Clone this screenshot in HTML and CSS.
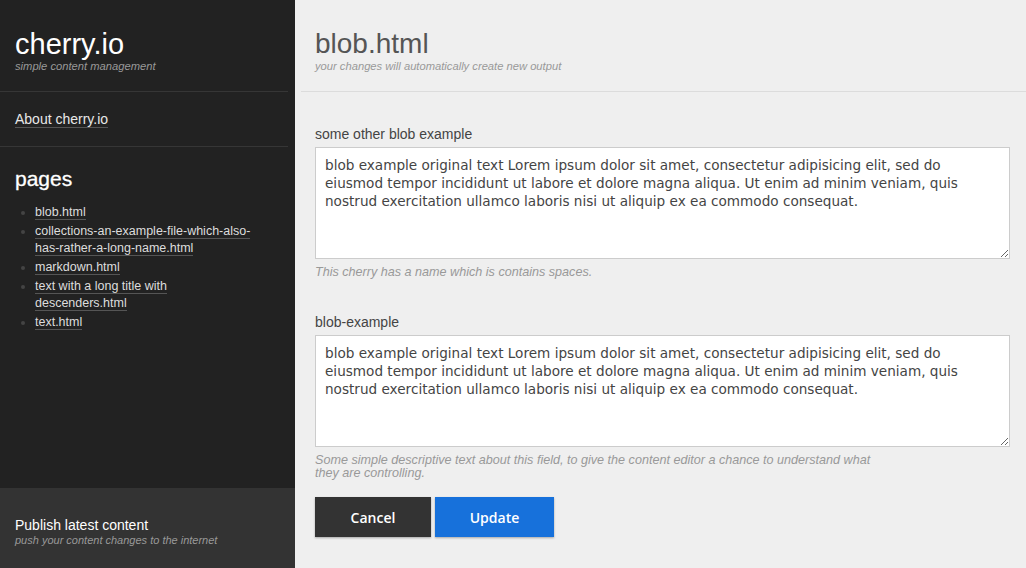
FILE: index.html
```html
<!DOCTYPE html>
<html>
<head>
<meta charset="utf-8">
<link rel="stylesheet" href="styles.css">
</head>
<body>
<div class="app">
  <aside class="sidebar">
    <div class="brand">
      <h1 class="brand-title">cherry.io</h1>
      <p class="brand-sub">simple content management</p>
    </div>
    <div class="about">
      <a class="link about-link" href="#">About cherry.io</a>
    </div>
    <div class="pages">
      <h2 class="pages-title">pages</h2>
      <ul class="page-list">
        <li><a class="link" href="#">blob.html</a></li>
        <li><a class="link" href="#">collections-an-example-file-which-also-has-rather-a-long-name.html</a></li>
        <li><a class="link" href="#">markdown.html</a></li>
        <li><a class="link" href="#">text with a long title with descenders.html</a></li>
        <li><a class="link" href="#">text.html</a></li>
      </ul>
    </div>
    <div class="publish">
      <div class="publish-title">Publish latest content</div>
      <div class="publish-sub">push your content changes to the internet</div>
    </div>
  </aside>
  <main class="main">
    <header class="main-header">
      <h1 class="main-title">blob.html</h1>
      <p class="main-sub">your changes will automatically create new output</p>
    </header>
    <form class="form">
      <div class="field">
        <label class="field-label">some other blob example</label>
        <textarea class="field-input">blob example original text Lorem ipsum dolor sit amet, consectetur adipisicing elit, sed do eiusmod tempor incididunt ut labore et dolore magna aliqua. Ut enim ad minim veniam, quis nostrud exercitation ullamco laboris nisi ut aliquip ex ea commodo consequat.</textarea>
        <p class="field-help">This cherry has a name which is contains spaces.</p>
      </div>
      <div class="field field-last">
        <label class="field-label">blob-example</label>
        <textarea class="field-input">blob example original text Lorem ipsum dolor sit amet, consectetur adipisicing elit, sed do eiusmod tempor incididunt ut labore et dolore magna aliqua. Ut enim ad minim veniam, quis nostrud exercitation ullamco laboris nisi ut aliquip ex ea commodo consequat.</textarea>
        <p class="field-help">Some simple descriptive text about this field, to give the content editor a chance to understand what they are controlling.</p>
      </div>
      <div class="actions">
        <button type="button" class="btn btn-cancel">Cancel</button>
        <button type="button" class="btn btn-update">Update</button>
      </div>
    </form>
  </main>
</div>
</body>
</html>
```
FILE: styles.css
```css
* { box-sizing: border-box; }
html, body { margin: 0; padding: 0; height: 100%; }
body {
  font-family: "Liberation Sans", Arial, sans-serif;
  background: #efefef;
  overflow: hidden;
}
.app {
  display: flex;
  height: 568px;
}
.sidebar {
  width: 295px;
  flex: none;
  background: #222;
  color: #fff;
  display: flex;
  flex-direction: column;
}
.brand {
  padding: 29px 15px 18px;
  border-bottom: 1px solid #363636;
  margin-right: 7px;
}
.brand-title {
  margin: 0;
  font-size: 29px;
  font-weight: normal;
  line-height: 30px;
}
.brand-sub {
  margin: 1px 0 0;
  font-size: 11.2px;
  font-style: italic;
  color: #999;
  line-height: 13px;
}
.link {
  color: #ddd;
  text-decoration: none;
  border-bottom: 1px solid #555;
}
.about {
  padding: 18px 15px 18px;
  border-bottom: 1px solid #363636;
  margin-right: 7px;
  line-height: 17px;
}
.about-link {
  font-size: 14px;
  color: #e8e8e8;
}
.pages {
  padding: 20px 15px 0;
  flex: 1;
}
.pages-title {
  margin: 0 0 13px;
  font-size: 21px;
  font-weight: normal;
  line-height: 24px;
  color: #fff;
  -webkit-text-stroke: 0.3px #fff;
}
.page-list {
  margin: 0;
  padding: 0 0 0 20px;
  font-size: 12.5px;
  line-height: 17px;
  color: #444;
  width: 242px;
}
.page-list li { margin-bottom: 2px; }
.page-list .link { color: #ddd; }
.publish {
  background: #333;
  height: 80px;
  padding: 29px 15px 0;
}
.publish-title {
  font-size: 14px;
  color: #fff;
  line-height: 16px;
}
.publish-sub {
  font-size: 11px;
  font-style: italic;
  color: #999;
  line-height: 14px;
}
.main {
  flex: 1;
  min-width: 0;
}
.main-header {
  margin-left: 6px;
  padding: 29px 0 18px 14px;
  border-bottom: 1px solid #dcdcdc;
}
.main-title {
  margin: 0;
  font-size: 28px;
  font-weight: normal;
  color: #555;
  line-height: 30px;
}
.main-sub {
  margin: 1px 0 0;
  font-size: 11.2px;
  font-style: italic;
  color: #999;
  line-height: 13px;
}
.form {
  padding: 34px 16px 0 20px;
}
.field { margin-bottom: 35px; }
.field-last { margin-bottom: 17px; }
.field-label {
  display: block;
  font-size: 14px;
  color: #444;
  line-height: 16px;
  margin-bottom: 5px;
}
.field-input {
  display: block;
  width: 695px;
  height: 112px;
  border: 1px solid #ccc;
  background: #fff;
  padding: 8px 9px;
  font-family: "DejaVu Sans", Verdana, sans-serif;
  font-size: 13.6px;
  line-height: 18px;
  color: #444;
  resize: vertical;
  margin: 0;
}
.field-help {
  margin: 7px 0 0;
  font-size: 12.6px;
  font-style: italic;
  color: #999;
  line-height: 13px;
  max-width: 560px;
}
.actions {
  display: flex;
  gap: 4px;
}
.btn {
  height: 40px;
  border: 0;
  color: #fff;
  font-family: "Open Sans", sans-serif;
  font-weight: 600;
  font-size: 14px;
  box-shadow: 0 1px 2px rgba(0,0,0,0.3);
  cursor: pointer;
}
.btn-cancel { background: #333; width: 116px; }
.btn-update { background: #1771db; width: 119px; }
```
